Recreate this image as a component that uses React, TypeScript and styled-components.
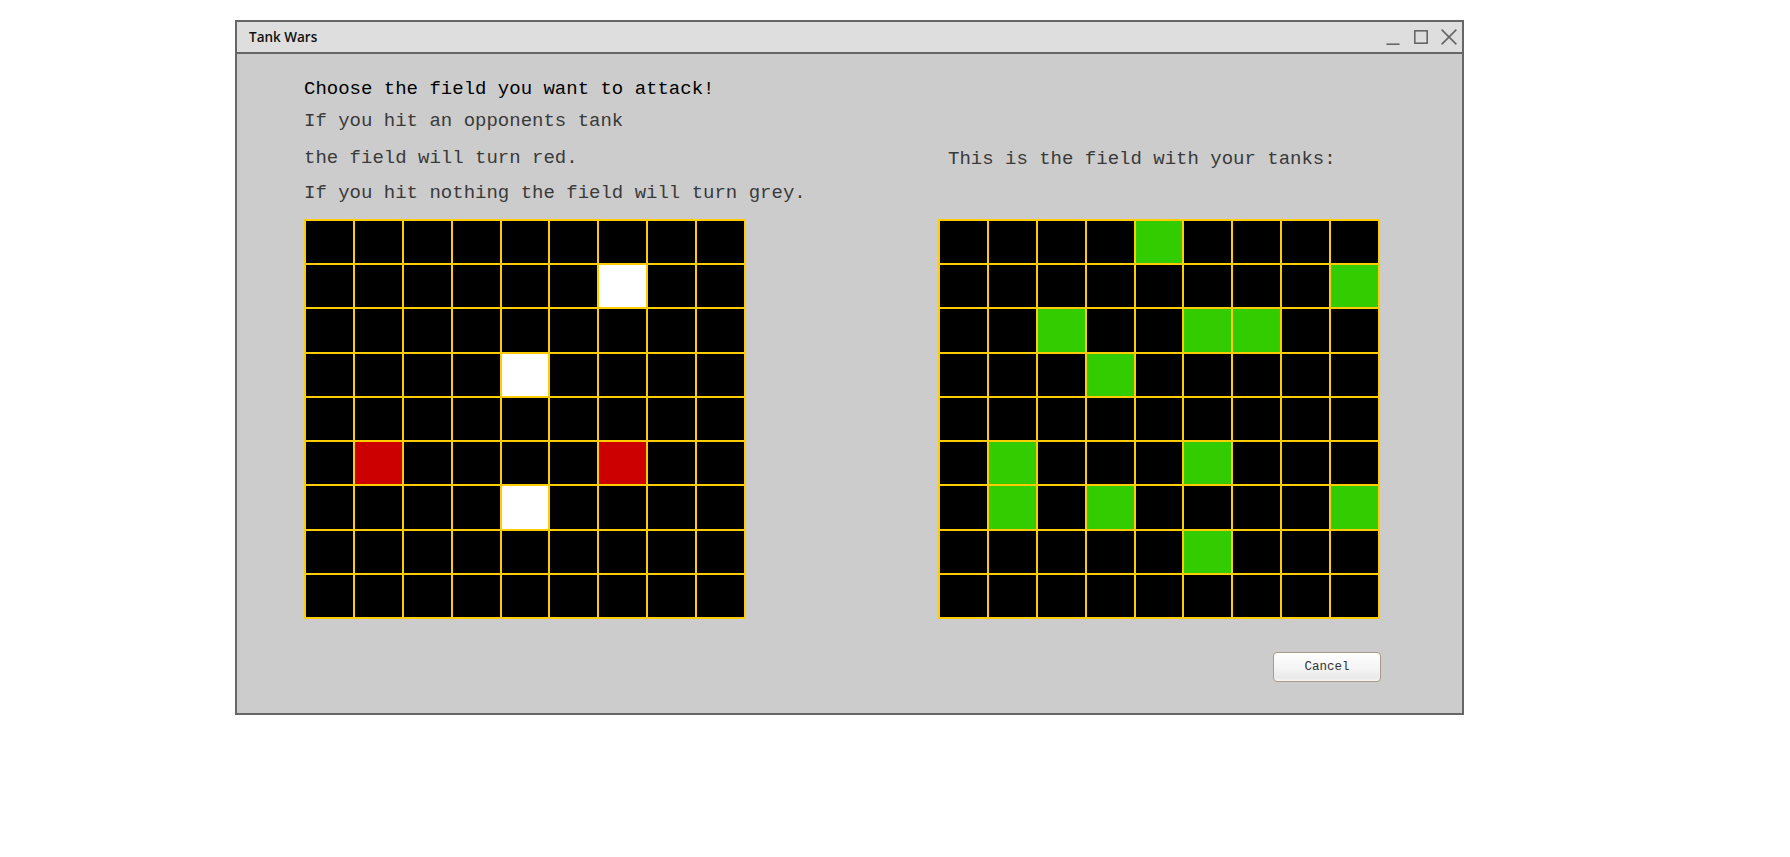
import styled, { createGlobalStyle } from "styled-components";

const GlobalStyle = createGlobalStyle`
    html, body {
        margin: 0;
        padding: 0;
        background: #ffffff;
    }
`

type Fill = "empty" | "miss" | "hit" | "tank";

const fills: Record<Fill, string> = {
    empty: "#000000",
    miss: "#ffffff",
    hit: "#cc0000",
    tank: "#33cc00",
};

// row, col -> state
const attackMarks: Record<string, Fill> = {
    "1-6": "miss",
    "3-4": "miss",
    "5-1": "hit",
    "5-6": "hit",
    "6-4": "miss",
};

const myTanks = ["0-4", "1-8", "2-2", "2-5", "2-6", "3-3", "5-1", "5-5", "6-1", "6-3", "6-8", "7-5"];

const makeBoard = (pick: (key: string) => Fill) =>
    Array.from({length: 81}, (_, i) => pick(`${Math.floor(i / 9)}-${i % 9}`));

const attackBoard = makeBoard(k => attackMarks[k] ?? "empty");
const ownBoard = makeBoard(k => (myTanks.includes(k) ? "tank" : "empty"));

export default function App() {
    return (
        <Page>
            <GlobalStyle/>
            <Window>
                <TitleBar>
                    <Title>Tank Wars</Title>
                    <Controls>
                        <ControlIcon viewBox="0 0 16 16">
                            <line x1="1.5" y1="15.2" x2="14.5" y2="15.2"/>
                        </ControlIcon>
                        <ControlIcon viewBox="0 0 16 16">
                            <rect x="1.8" y="1.8" width="12.4" height="12.4"/>
                        </ControlIcon>
                        <ControlIcon viewBox="0 0 16 16">
                            <line x1="0.6" y1="0.6" x2="15.4" y2="15.4"/>
                            <line x1="15.4" y1="0.6" x2="0.6" y2="15.4"/>
                        </ControlIcon>
                    </Controls>
                </TitleBar>
                <Content>
                    <Line $strong>Choose the field you want to attack!</Line>
                    <Line $gap={10}>If you hit an opponents tank</Line>
                    <Columns>
                        <Column>
                            <Line>the field will turn red.</Line>
                            <Line $gap={13}>If you hit nothing the field will turn grey.</Line>
                            <Board $gap={15}>
                                {attackBoard.map((f, i) => <Cell key={i} $fill={f}/>)}
                            </Board>
                        </Column>
                        <Column>
                            <Line $indent={10} $gap={1}>This is the field with your tanks:</Line>
                            <Board>
                                {ownBoard.map((f, i) => <Cell key={i} $fill={f}/>)}
                            </Board>
                        </Column>
                    </Columns>
                    <Footer>
                        <Button type="button">Cancel</Button>
                    </Footer>
                </Content>
            </Window>
        </Page>
    );
}

const Page = styled.div`
    padding: 20px 0 0 235px;
`

const Window = styled.div`
    width: 1229px;
    height: 695px;
    box-sizing: border-box;
    border: 2px solid #666666;
    background: #cccccc;
    display: flex;
    flex-direction: column;
`

const TitleBar = styled.div`
    height: 30px;
    flex-shrink: 0;
    background: #dedede;
    border-bottom: 2px solid #666666;
    display: flex;
    align-items: center;
    justify-content: space-between;
    padding: 0 5px 0 12px;
`

const Title = styled.span`
    font-family: "Open Sans", "Noto Sans", sans-serif;
    font-weight: 600;
    font-size: 13.5px;
    line-height: 30px;
    color: #111111;
`

const Controls = styled.div`
    display: flex;
    align-items: center;
    gap: 12px;
`

const ControlIcon = styled.svg`
    width: 16px;
    height: 16px;
    fill: none;
    stroke: #666666;
    stroke-width: 1.6;
`

const Content = styled.div`
    padding: 24px 0 0 67px;
    display: flex;
    flex-direction: column;
    width: 1076px;
`

const Line = styled.div<{ $strong?: boolean; $gap?: number; $indent?: number }>`
    font-family: "Liberation Mono", "Courier New", monospace;
    font-size: 19px;
    line-height: 22px;
    white-space: nowrap;
    color: ${p => (p.$strong ? "#000000" : "#3a3a3a")};
    margin-top: ${p => p.$gap ?? 0}px;
    padding-left: ${p => p.$indent ?? 0}px;
`

const Columns = styled.div`
    display: flex;
    gap: 192px;
    margin-top: 15px;
`

const Column = styled.div`
    width: 442px;
    flex-shrink: 0;
    display: flex;
    flex-direction: column;
    justify-content: space-between;
`

const Board = styled.div<{ $gap?: number }>`
    width: 442px;
    height: 400px;
    box-sizing: border-box;
    margin-top: ${p => p.$gap ?? 0}px;
    padding: 2px;
    gap: 2px;
    background: #ffcc00;
    display: grid;
    grid-template-columns: repeat(9, 1fr);
    grid-template-rows: repeat(9, 1fr);
`

const Cell = styled.div<{ $fill: Fill }>`
    background: ${p => fills[p.$fill]};
`

const Footer = styled.div`
    display: flex;
    justify-content: flex-end;
    margin-top: 33px;
    margin-right: -1px;
`

const Button = styled.button`
    width: 108px;
    height: 30px;
    border: 1px solid #a89a88;
    border-radius: 4px;
    background: linear-gradient(#ffffff 0%, #f4f4f4 55%, #e9e9e9 90%, #f6f6f6 100%);
    font-family: "Liberation Mono", "Courier New", monospace;
    font-size: 12.5px;
    color: #333333;
    cursor: pointer;
    padding: 0;
`
